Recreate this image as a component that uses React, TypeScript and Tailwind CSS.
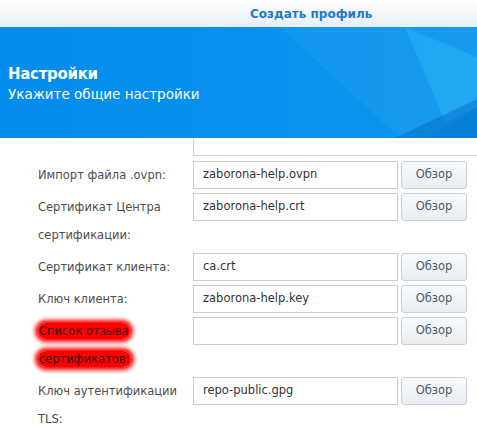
import React from "react";

const font = { fontFamily: '"DejaVu Sans", Verdana, sans-serif' };

interface Row {
  label: React.ReactNode;
  value: string;
  marked?: boolean;
}

const rows: Row[] = [
  { label: "Импорт файла .ovpn:", value: "zaborona-help.ovpn" },
  { label: <>Сертификат Центра<br />сертификации:</>, value: "zaborona-help.crt" },
  { label: "Сертификат клиента:", value: "ca.crt" },
  { label: "Ключ клиента:", value: "zaborona-help.key" },
  { label: null, value: "", marked: true },
  { label: <>Ключ аутентификации<br />TLS:</>, value: "repo-public.gpg" },
];

function Marked({ children }: { children: React.ReactNode }) {
  return (
    <span className="rounded-full bg-[#ff0000] px-[1px] py-[1px] text-[#3a0000] shadow-[0_0_4px_3px_#ff0000]">
      {children}
    </span>
  );
}

function Banner() {
  return (
    <div className="relative h-[111px] overflow-hidden bg-gradient-to-r from-[#028ced] to-[#0a96ee]">
      <svg className="absolute inset-0" width="477" height="111" viewBox="0 0 477 111">
        <polygon points="280,0 477,0 477,80 430,111 400,111" fill="#ffffff" opacity="0.05" />
        <polygon points="405,0 477,30 477,80 445,95" fill="#3cc8ff" opacity="0.28" />
        <polygon points="395,111 477,72 477,111" fill="#0058b0" opacity="0.35" />
      </svg>
      <div className="relative pl-[8px] pt-[37px] text-white">
        <div className="text-[15px] font-bold leading-[21px] tracking-[-0.3px]">Настройки</div>
        <div className="text-[13.5px] leading-[18px]">Укажите общие настройки</div>
      </div>
    </div>
  );
}

export default function App() {
  return (
    <div className="h-[431px] w-[477px] overflow-hidden bg-white" style={font}>
      <div className="flex h-[27px] items-center bg-gradient-to-b from-white to-[#e6eef7] pl-[250px]">
        <span className="text-[12px] font-bold text-[#1d79cc]">Создать профиль</span>
      </div>
      <Banner />
      <div className="ml-[193px] h-[18px] border-b border-l border-[#cfd4d9]" />
      <div className="mt-[5px] flex flex-col gap-[4px] pl-[38px]">
        {rows.map((r, i) => (
          <div key={i} className="flex items-start">
            <div className="w-[155px] text-[11.5px] leading-[28px] whitespace-nowrap text-[#4d4d4d]">
              {r.marked ? (
                <>
                  <Marked>Список отзыва</Marked>
                  <br />
                  <Marked>сертификатов:</Marked>
                </>
              ) : (
                r.label
              )}
            </div>
            <div className="flex h-[28px] w-[205px] items-center border border-[#c9ced4] bg-white px-[9px] text-[11.5px] text-[#333]">
              {r.value}
            </div>
            <button className="ml-[3px] h-[28px] w-[66px] rounded-[3px] border border-[#c8d0d8] bg-gradient-to-b from-[#f7f9fb] to-[#e9eef3] text-[11.5px] text-[#4a5866]">
              Обзор
            </button>
          </div>
        ))}
      </div>
    </div>
  );
}
